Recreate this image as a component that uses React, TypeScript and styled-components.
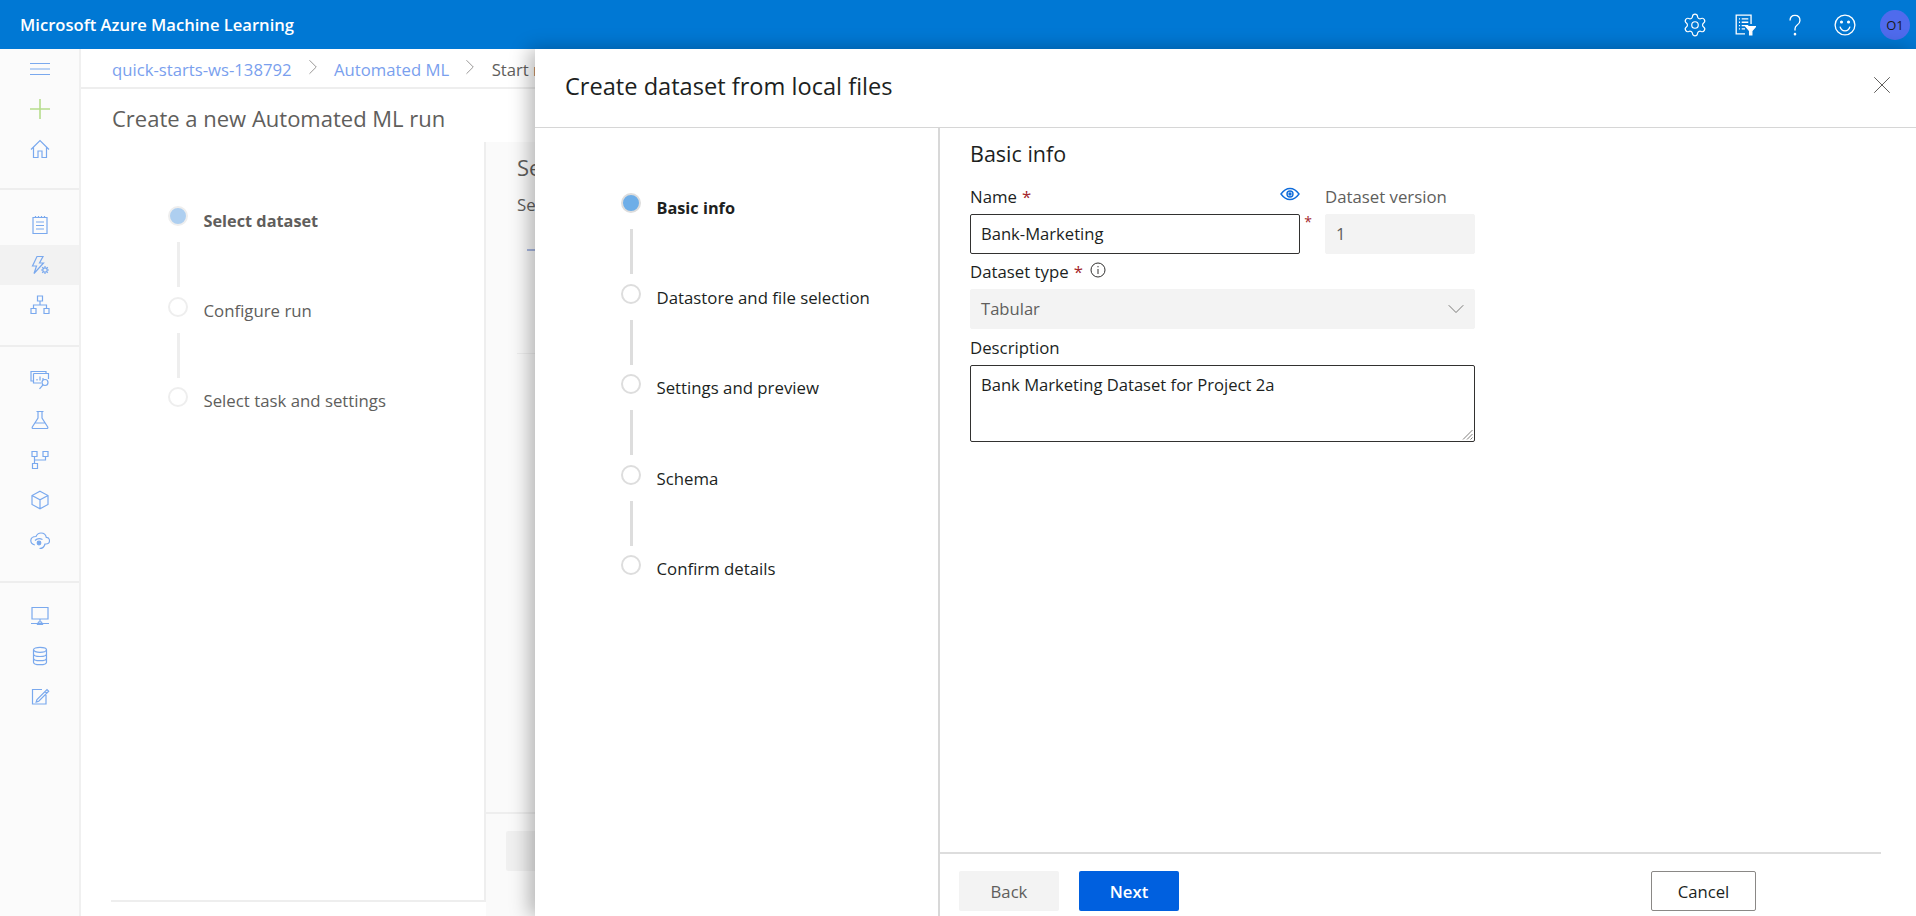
import React from 'react';
import styled, { createGlobalStyle } from 'styled-components';
import { Settings, X, ChevronDown, ChevronRight } from 'lucide-react';

const GlobalStyle = createGlobalStyle`
  html, body {
    margin: 0;
    padding: 0;
    height: 100%;
    overflow: hidden;
    background: #fff;
    font-family: "Open Sans", "Noto Sans", "Liberation Sans", sans-serif;
  }
  * { box-sizing: border-box; }
`;

const Shell = styled.div`
  position: relative;
  width: 100vw;
  height: 100vh;
  display: flex;
  flex-direction: column;
  overflow: hidden;
`;

const TopBar = styled.header`
  height: 49px;
  flex: none;
  background: #0078d4;
  color: #fff;
  display: flex;
  align-items: center;
  padding: 0 6px 0 20px;
`;

const Brand = styled.div`
  font-size: 16.6px;
  font-weight: 600;
  margin-right: auto;
`;

const TopIcon = styled.div`
  width: 50px;
  height: 49px;
  display: flex;
  align-items: center;
  justify-content: center;
  color: #fff;
`;

const Avatar = styled.div`
  width: 30px;
  height: 30px;
  margin: 0 0 0 10px;
  border-radius: 50%;
  background: #4f6bed;
  color: #1b1a19;
  font-size: 13px;
  display: flex;
  align-items: center;
  justify-content: center;
`;

const Body = styled.div`
  flex: 1;
  display: flex;
  min-height: 0;
`;

const Sidebar = styled.nav`
  width: 81px;
  flex: none;
  background: #fbfbfb;
  border-right: 2px solid #f0f0f0;
  display: flex;
  flex-direction: column;
`;

const NavGroup = styled.div<{ $top: number; $bottom: number; $end?: boolean }>`
  padding: ${({ $top, $bottom }) => `${$top}px 0 ${$bottom}px`};
  border-bottom: ${({ $end }) => ($end ? 'none' : '2px solid #eeeeee')};
`;

const NavItem = styled.div<{ $active?: boolean }>`
  height: 40px;
  width: 79px;
  display: flex;
  align-items: center;
  justify-content: center;
  color: #7aa9ee;
  background: ${({ $active }) => ($active ? '#f2f2f2' : 'transparent')};
`;

const Glyph = styled.svg.attrs({ viewBox: '0 0 20 20', fill: 'none', stroke: 'currentColor' })<{ $size?: number }>`
  width: ${({ $size }) => $size ?? 20}px;
  height: ${({ $size }) => $size ?? 20}px;
  stroke-width: 1.2;
  display: block;
`;

const Main = styled.main`
  flex: 1;
  min-width: 0;
  display: flex;
  flex-direction: column;
`;

const Breadcrumb = styled.div`
  height: 40px;
  flex: none;
  border-bottom: 2px solid #eeeeee;
  padding: 2px 0 0 31px;
  display: flex;
  align-items: center;
  font-size: 16.7px;
  white-space: nowrap;
`;

const Crumb = styled.span<{ $current?: boolean }>`
  color: ${({ $current }) => ($current ? '#605e5c' : '#7a9fee')};
`;

const CrumbSep = styled.span`
  width: 42.5px;
  display: flex;
  justify-content: center;
  margin-top: -4px;
  color: #8a8886;
`;

const PageTitle = styled.h1`
  margin: 0;
  height: 53px;
  padding: 4px 0 0 31px;
  display: flex;
  align-items: center;
  font-size: 22px;
  font-weight: 500;
  color: #605e5c;
  white-space: nowrap;
`;

const Workspace = styled.div`
  flex: 1;
  display: flex;
  min-height: 0;
  padding-bottom: 14px;
`;

const WizardPane = styled.section`
  width: 375px;
  margin-left: 30px;
  flex: none;
  border-right: 2px solid #eeeeee;
  border-bottom: 2px solid #eeeeee;
  padding: 64px 0 0 57px;
`;

const WizardContent = styled.section`
  flex: 1;
  min-width: 0;
  background: #fafafa;
  display: flex;
  flex-direction: column;
  margin-bottom: -14px;
`;

const ContentBody = styled.div`
  flex: 1;
  padding: 10px 0 0 31px;
`;

const ContentHeading = styled.h2`
  margin: 0;
  font-size: 22px;
  font-weight: 500;
  color: #605e5c;
  white-space: nowrap;
`;

const ContentText = styled.p`
  margin: 11px 0 0;
  font-size: 16.8px;
  color: #605e5c;
  white-space: nowrap;
`;

const ContentTab = styled.div`
  width: 40px;
  height: 2px;
  margin: 33px 0 0 10px;
  background: #a9b8e0;
`;

const ContentRule = styled.div`
  height: 1px;
  margin-top: 102px;
  background: #eeeeee;
`;

const ContentFooter = styled.div`
  height: 104px;
  flex: none;
  border-top: 2px solid #eeeeee;
  padding: 17px 0 0 20px;
`;

const GhostButton = styled.div`
  width: 100px;
  height: 40px;
  background: #f0f0f0;
  border-radius: 2px;
`;

const Stepper = styled.ol`
  margin: 0;
  padding: 0;
  list-style: none;
`;

const Step = styled.li`
  display: flex;
  gap: 15.5px;
  height: 20px;
`;

const StepDot = styled.span<{ $active?: boolean; $faded?: boolean }>`
  width: 20px;
  height: 20px;
  flex: none;
  border-radius: 50%;
  border: 2px solid ${({ $faded }) => ($faded ? '#eeeeee' : '#dddddd')};
  background: ${({ $active, $faded }) =>
    !$active ? '#fff' : $faded ? '#aecff0' : '#6eaee8'};
`;

const StepLabel = styled.span<{ $active?: boolean; $faded?: boolean }>`
  line-height: ${({ $active }) => ($active ? '30px' : '28px')};
  height: 20px;
  font-size: ${({ $active }) => ($active ? '16.3px' : '16.8px')};
  white-space: nowrap;
  font-weight: ${({ $active }) => ($active ? 700 : 500)};
  color: ${({ $faded }) => ($faded ? '#605e5c' : '#201f1e')};
`;

const StepLine = styled.li<{ $faded?: boolean }>`
  width: 3px;
  height: 45px;
  margin: 16px 0 9.5px 8.5px;
  background: ${({ $faded }) => ($faded ? '#eeeeee' : '#dddddd')};
`;

const Modal = styled.aside`
  position: absolute;
  top: 49px;
  left: 535px;
  right: 0;
  bottom: 0;
  background: #fff;
  box-shadow: -6px 0 18px rgba(0, 0, 0, 0.28);
  display: flex;
  flex-direction: column;
`;

const ModalHeader = styled.div`
  height: 79px;
  flex: none;
  border-bottom: 1px solid #d6d6d6;
  padding: 0 19px 4px 30px;
  display: flex;
  align-items: center;
  justify-content: space-between;
`;

const ModalTitle = styled.h2`
  margin: 0;
  font-size: 23.6px;
  font-weight: 400;
  color: #201f1e;
`;

const CloseButton = styled.div`
  display: flex;
  margin-bottom: 2px;
  color: #605e5c;
`;

const ModalBody = styled.div`
  flex: 1;
  min-height: 0;
  display: flex;
`;

const StepsPane = styled.div`
  width: 405px;
  flex: none;
  border-right: 2px solid #d8d8d8;
  padding: 65px 0 0 86px;
`;

const FormPane = styled.div`
  flex: 1;
  min-width: 0;
  display: flex;
  flex-direction: column;
  padding-right: 35px;
`;

const FormArea = styled.div`
  flex: 1;
  padding: 10px 0 0 30px;
`;

const FormTitle = styled.h3`
  margin: 0 0 16px;
  font-size: 21.5px;
  line-height: 32px;
  font-weight: 500;
  color: #201f1e;
`;

const FormGrid = styled.div`
  width: 505px;
  display: grid;
  grid-template-columns: 330px 150px;
  column-gap: 25px;
`;

const FieldWrap = styled.div<{ $wide?: boolean; $gap?: number }>`
  position: relative;
  grid-column: ${({ $wide }) => ($wide ? '1 / -1' : 'auto')};
  margin-top: ${({ $gap }) => $gap ?? 0}px;
`;

const Label = styled.div<{ $muted?: boolean }>`
  height: 24px;
  margin-bottom: 4px;
  padding-bottom: 3px;
  display: flex;
  align-items: center;
  gap: 5px;
  font-size: 16.8px;
  font-weight: 500;
  color: ${({ $muted }) => ($muted ? '#605e5c' : '#201f1e')};
`;

const Required = styled.span`
  color: #a4262c;
`;

const Box = styled.div<{ $disabled?: boolean; $tall?: boolean }>`
  position: relative;
  height: ${({ $tall }) => ($tall ? '77px' : '40px')};
  padding: ${({ $tall }) => ($tall ? '7px 10px' : '0 10px')};
  border-radius: 2px;
  border: 1px solid ${({ $disabled }) => ($disabled ? '#f3f3f3' : '#323130')};
  background: ${({ $disabled }) => ($disabled ? '#f3f3f3' : '#fff')};
  color: ${({ $disabled }) => ($disabled ? '#605e5c' : '#201f1e')};
  font-size: 16.6px;
  line-height: ${({ $tall }) => ($tall ? '24px' : '38px')};
  display: ${({ $tall }) => ($tall ? 'block' : 'flex')};
  justify-content: space-between;
  align-items: center;
`;

const SelectArrow = styled.span`
  display: flex;
  margin-right: -6px;
  color: #605e5c;
`;

const Grip = styled.svg`
  position: absolute;
  right: 1px;
  bottom: 1px;
  width: 11px;
  height: 11px;
`;

const EyeMark = styled.svg`
  position: absolute;
  right: 0;
  top: 1px;
  width: 20px;
  height: 14px;
  color: #0f6cdb;
`;

const FieldStar = styled.span`
  position: absolute;
  top: 26px;
  right: -12px;
  font-size: 14px;
  color: #a4262c;
`;

const InfoMark = styled.svg`
  width: 16px;
  height: 16px;
  margin: -3px 0 0 2px;
  color: #323130;
`;

const Footer = styled.div`
  height: 64px;
  flex: none;
  border-top: 2px solid #dddddd;
  padding: 17px 125px 0 19px;
  display: flex;
  gap: 20px;
`;

const Button = styled.div<{ $variant: 'disabled' | 'primary' | 'outline' }>`
  height: 40px;
  width: ${({ $variant }) => ($variant === 'outline' ? '105px' : '100px')};
  margin-left: ${({ $variant }) => ($variant === 'outline' ? 'auto' : '0')};
  border-radius: 2px;
  display: flex;
  align-items: center;
  justify-content: center;
  font-size: 16.7px;
  font-weight: ${({ $variant }) => ($variant === 'primary' ? 600 : 500)};
  color: ${({ $variant }) =>
    $variant === 'primary' ? '#fff' : $variant === 'disabled' ? '#605e5c' : '#201f1e'};
  background: ${({ $variant }) =>
    $variant === 'primary' ? '#0060df' : $variant === 'disabled' ? '#f3f3f3' : '#fff'};
  border: ${({ $variant }) => ($variant === 'outline' ? '1px solid #8a8886' : 'none')};
`;

type NavEntry = { id: string; art: React.ReactNode };

const navGroups: { top: number; bottom: number; items: NavEntry[] }[] = [
  {
    top: 0,
    bottom: 19,
    items: [
      {
        id: 'menu',
        art: <path d="M0 4.5h20M0 10h20M0 15.5h20" />,
      },
      {
        id: 'new',
        art: <path d="M10 0v20M0 10h20" stroke="#b6dd8c" strokeWidth="1.6" />,
      },
      {
        id: 'home',
        art: <path d="M1 10.5 10 1.5l9 9M3.5 8.5V18.5h4.5v-6.5h4v6.5h4.500V8.500" />,
      },
    ],
  },
  {
    top: 15,
    bottom: 20,
    items: [
      {
        id: 'notebooks',
        art: <path d="M3 2.500h14v16H3zM5.500 1v2M8.500 1v2M11.500 1v2M14.500 1v2M6 7h8M6 10.500h8M6 14h8" />,
      },
      {
        id: 'automl',
        art: (
          <>
            <path d="M7 1.500h6L9.500 8h4L4 18.500 6.500 11H2.500z" />
            <circle cx="15" cy="15" r="2.200" />
            <path d="M15 11v1.500M15 17.500V19M11 15h1.500M17.500 15H19M12.200 12.200l1 1M16.800 16.800l1 1M17.800 12.200l-1 1M13.200 16.800l-1 1" />
          </>
        ),
      },
      {
        id: 'designer',
        art: <path d="M7.500 1h5v5h-5zM1 13.500h5v5H1zM14 13.500h5v5h-5zM10 6v4M3.500 13.500V10h13v3.500" />,
      },
    ],
  },
  {
    top: 13,
    bottom: 21,
    items: [
      {
        id: 'datasets',
        art: (
          <>
            <path d="M1 5V1.500h15V3M3.500 3.500H18.500V9M3.500 3.500V13H11M1 1.500V11h2.500" />
            <path d="M7 10.500V9M10 10.500V6.500M13 10.500V8" />
            <circle cx="15" cy="12.500" r="3" />
            <path d="M13 14.800 9.500 18.800" />
          </>
        ),
      },
      {
        id: 'experiments',
        art: <path d="M6.500 1.500h7M8 1.500V8L2.300 17q-.6 1.500 1 1.500h13.400q1.600 0 1-1.500L12 8V1.500M5 13h10" />,
      },
      {
        id: 'pipelines',
        art: <path d="M2 1.500h5v5H2zM13 1.500h5v5h-5zM2.500 13.500h5v5h-5zM4.500 6.500v7M4.500 10h11V6.500" />,
      },
      {
        id: 'models',
        art: <path d="M10 1.200 18 5.500v9l-8 4.300-8-4.300v-9zM2 5.500l8 4.300 8-4.300M10 9.800v9" />,
      },
      {
        id: 'endpoints',
        art: (
          <>
            <path d="M14.500 14H16q3.500 0 3.500-3.300 0-3-3.200-3.300Q15.500 3 11 3 7.500 3 6 6.500 1 6.500.8 10.500q0 3.500 4 4.500" />
            <path d="M5 10.500Q8 7.500 12.500 9.500M15 14q-1 4.500-5.500 4.500" />
            <circle cx="9" cy="13" r="1.800" fill="currentColor" />
          </>
        ),
      },
    ],
  },
  {
    top: 13,
    bottom: 0,
    items: [
      {
        id: 'compute',
        art: <path d="M2 1.500h16V13H2zM10 13v3M1 17.500h18M7.500 18.500 8.500 16h3l1 2.500z" />,
      },
      {
        id: 'datastores',
        art: (
          <>
            <ellipse cx="10" cy="3.800" rx="6.500" ry="2.500" />
            <path d="M3.500 3.800v12.400Q3.500 18.700 10 18.700t6.500-2.500V3.800M3.500 8Q3.500 10.500 10 10.500T16.500 8M3.500 12.200Q3.500 14.700 10 14.700t6.500-2.500" />
          </>
        ),
      },
      {
        id: 'labeling',
        art: <path d="M16 9v9H2.500V3.500H12M7 13.500l-.8 2.500 2.500-.8 10-10-1.700-1.700zM15 5.500l1.700 1.700" />,
      },
    ],
  },
];

const wizardSteps = ['Select dataset', 'Configure run', 'Select task and settings'];
const datasetSteps = [
  'Basic info',
  'Datastore and file selection',
  'Settings and preview',
  'Schema',
  'Confirm details',
];

const StepList: React.FC<{ steps: string[]; faded?: boolean }> = ({ steps, faded }) => (
  <Stepper>
    {steps.map((label, i) => (
      <React.Fragment key={label}>
        {i > 0 && <StepLine $faded={faded} />}
        <Step>
          <StepDot $active={i === 0} $faded={faded} />
          <StepLabel $active={i === 0} $faded={faded}>
            {label}
          </StepLabel>
        </Step>
      </React.Fragment>
    ))}
  </Stepper>
);

export default function App() {
  return (
    <Shell>
      <GlobalStyle />
      <TopBar>
        <Brand>Microsoft Azure Machine Learning</Brand>
        <TopIcon>
          <Settings size={26} strokeWidth={1.1} />
        </TopIcon>
        <TopIcon>
          <Glyph $size={22}>
            <path d="M15.500 9V1H2v17h8M4.500 4.500h1M7 4.500h6M4.500 7.500h1M7 7.500h6M4.500 10.500h1M7 10.500h6M4.500 13.500h1M7 13.500h3" />
            <path d="M11 11.500h8.500l-3.300 3.700V19h-2v-3.800z" fill="currentColor" />
          </Glyph>
        </TopIcon>
        <TopIcon>
          <Glyph $size={22}>
            <path d="M5.500 6Q5.500 1.300 10 1.300T14.500 6q0 2.500-2.500 4-2 1.300-2 3.500v1.500" />
            <circle cx="10" cy="18.300" r=".6" fill="currentColor" />
          </Glyph>
        </TopIcon>
        <TopIcon>
          <Glyph $size={22}>
            <circle cx="10" cy="10" r="9" />
            <path d="M5.500 11.500Q6.500 15.300 10 15.300t4.500-3.800" />
            <circle cx="6.800" cy="7.300" r=".8" fill="currentColor" />
            <circle cx="13.200" cy="7.300" r=".8" fill="currentColor" />
          </Glyph>
        </TopIcon>
        <Avatar>O1</Avatar>
      </TopBar>

      <Body>
        <Sidebar>
          {navGroups.map((group, g) => (
            <NavGroup key={g} $top={group.top} $bottom={group.bottom} $end={g === navGroups.length - 1}>
              {group.items.map(item => (
                <NavItem key={item.id} $active={item.id === 'automl'}>
                  <Glyph>{item.art}</Glyph>
                </NavItem>
              ))}
            </NavGroup>
          ))}
        </Sidebar>

        <Main>
          <Breadcrumb>
            <Crumb>quick-starts-ws-138792</Crumb>
            <CrumbSep>
              <ChevronRight size={26} strokeWidth={0.8} />
            </CrumbSep>
            <Crumb>Automated ML</Crumb>
            <CrumbSep>
              <ChevronRight size={26} strokeWidth={0.8} />
            </CrumbSep>
            <Crumb $current>Start run</Crumb>
          </Breadcrumb>
          <PageTitle>Create a new Automated ML run</PageTitle>
          <Workspace>
            <WizardPane>
              <StepList steps={wizardSteps} faded />
            </WizardPane>
            <WizardContent>
              <ContentBody>
                <ContentHeading>Select dataset</ContentHeading>
                <ContentText>Select a dataset</ContentText>
                <ContentTab />
                <ContentRule />
              </ContentBody>
              <ContentFooter>
                <GhostButton />
              </ContentFooter>
            </WizardContent>
          </Workspace>
        </Main>
      </Body>

      <Modal>
        <ModalHeader>
          <ModalTitle>Create dataset from local files</ModalTitle>
          <CloseButton>
            <X size={30} strokeWidth={0.8} />
          </CloseButton>
        </ModalHeader>
        <ModalBody>
          <StepsPane>
            <StepList steps={datasetSteps} />
          </StepsPane>
          <FormPane>
            <FormArea>
              <FormTitle>Basic info</FormTitle>
              <FormGrid>
                <FieldWrap>
                  <Label>
                    Name <Required>*</Required>
                  </Label>
                  <EyeMark viewBox="0 0 20 14" fill="none" stroke="currentColor" strokeWidth="1.400">
                    <path d="M1 7Q5 1.500 10 1.500T19 7q-4 5.500-9 5.500T1 7z" />
                    <circle cx="10" cy="7" r="3" />
                    <circle cx="10" cy="7" r="1" fill="currentColor" />
                  </EyeMark>
                  <Box>Bank-Marketing</Box>
                  <FieldStar>*</FieldStar>
                </FieldWrap>
                <FieldWrap>
                  <Label $muted>Dataset version</Label>
                  <Box $disabled>1</Box>
                </FieldWrap>
                <FieldWrap $wide $gap={7}>
                  <Label>
                    Dataset type <Required>*</Required>
                    <InfoMark viewBox="0 0 16 16" fill="none" stroke="currentColor">
                      <circle cx="8" cy="8" r="7" />
                      <path d="M8 7v5M8 4v1.300" />
                    </InfoMark>
                  </Label>
                  <Box $disabled>
                    Tabular
                    <SelectArrow>
                      <ChevronDown size={28} strokeWidth={0.7} />
                    </SelectArrow>
                  </Box>
                </FieldWrap>
                <FieldWrap $wide $gap={8}>
                  <Label>Description</Label>
                  <Box $tall>
                    Bank Marketing Dataset for Project 2a
                    <Grip viewBox="0 0 11 11" stroke="#605e5c" strokeWidth="0.800">
                      <path d="M10.500 1 1 10.500M10.500 5 5 10.500M10.500 8.500 8.500 10.500" />
                    </Grip>
                  </Box>
                </FieldWrap>
              </FormGrid>
            </FormArea>
            <Footer>
              <Button $variant="disabled">Back</Button>
              <Button $variant="primary">Next</Button>
              <Button $variant="outline">Cancel</Button>
            </Footer>
          </FormPane>
        </ModalBody>
      </Modal>
    </Shell>
  );
}
